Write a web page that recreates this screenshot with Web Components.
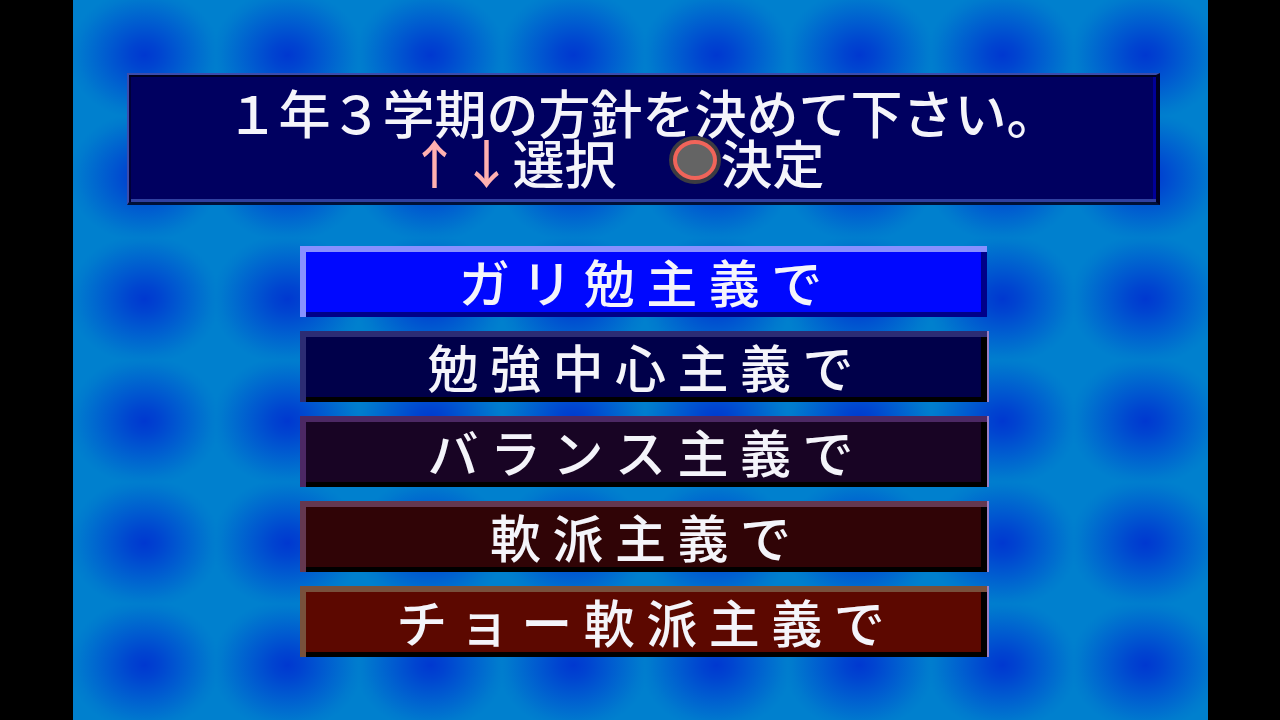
<!DOCTYPE html>
<html lang="ja">
<head>
<meta charset="utf-8">
<meta name="viewport" content="width=device-width, initial-scale=1">
<title>方針選択</title>
<style>
    html, body {
        height: 100%;
    }

    body {
        margin: 0;
        background: #000;
        color: #f4f4fa;
        font-family: "Noto Sans CJK JP", sans-serif;
        font-weight: 500;
    }
</style>
</head>
<body>

<policy-screen>
    <message-panel>
        <span>１年３学期の方針を決めて下さい。</span>
        <key-guide slot="guide"></key-guide>
    </message-panel>
    <policy-menu>
        <policy-option tone="blue" selected>ガ リ 勉 主 義 で</policy-option>
        <policy-option tone="navy">勉 強 中 心 主 義 で</policy-option>
        <policy-option tone="purple">バ ラ ン ス 主 義 で</policy-option>
        <policy-option tone="maroon">軟 派 主 義 で</policy-option>
        <policy-option tone="red">チ ョ ー 軟 派 主 義 で</policy-option>
    </policy-menu>
</policy-screen>

<script>
class PolicyScreen extends HTMLElement {
    constructor() {
        super()

        this.attachShadow({ mode: "open" })

        this.shadowRoot.innerHTML = /*html*/ `
            <style>
                :host {
                    display: block;
                    box-sizing: border-box;
                    min-height: 100%;
                    padding: 0 72px 0 73px;
                    background: #000;
                }

                main {
                    display: flex;
                    flex-direction: column;
                    gap: 41px;
                    box-sizing: border-box;
                    min-height: 100vh;
                    padding: 73px 48px 0 54px;
                    background: radial-gradient(76px 65px, #0038d0 0%, #0044d0 20%, #0058d0 45%, #006ccf 70%, #007ace 88%, #0080ce 100%) 0 -6px / 143px 122px #0080ce;
                }
            </style>

            <main><slot></slot></main>
        `
    }
}

class MessagePanel extends HTMLElement {
    constructor() {
        super()

        this.attachShadow({ mode: "open" })

        this.shadowRoot.innerHTML = /*html*/ `
            <style>
                :host {
                    display: block;
                    border: solid;
                    border-width: 2px 4px 3px 2px;
                    border-color: #3c4cac #000022 #001038 #3c4cac;
                    background: #000060;
                    box-shadow:
                        inset 0 2px #000020,
                        inset 2px 0 #000038,
                        inset 0 -3px #3040a0,
                        inset -3px 0 #000098;
                }

                h1 {
                    margin: 0;
                    padding: 12px 0 15px;
                    font-size: 52px;
                    font-weight: inherit;
                    line-height: 50px;
                    text-align: center;
                    white-space: nowrap;
                }
            </style>

            <h1><slot></slot><slot name="guide"></slot></h1>
        `
    }
}

class KeyGuide extends HTMLElement {
    constructor() {
        super()

        this.attachShadow({ mode: "open" })

        this.shadowRoot.innerHTML = /*html*/ `
            <style>
                :host {
                    display: block;
                }

                div {
                    white-space: pre;
                }

                .arrow {
                    color: #ffb0b0;
                }

                svg {
                    width: 1em;
                    height: 50px;
                    vertical-align: top;
                    overflow: visible;
                }
            </style>

            <div><span class="arrow">↑↓</span>選択　<svg viewBox="0 0 52 50" role="img" aria-label="まるボタン"><ellipse cx="26" cy="23" rx="26" ry="24" fill="#3c3c42"/><ellipse cx="26" cy="23" rx="20" ry="18" fill="#646464" stroke="#f0645a" stroke-width="4"/></svg>決定　</div>
        `
    }
}

class PolicyMenu extends HTMLElement {
    constructor() {
        super()

        this.attachShadow({ mode: "open" })

        this.shadowRoot.innerHTML = /*html*/ `
            <style>
                :host {
                    display: flex;
                    flex-direction: column;
                    gap: 14px;
                    width: 66.5%;
                    margin: 0 auto;
                }
            </style>

            <slot></slot>
        `

        this.addEventListener("click", event => {
            const option = event.target.closest("policy-option")
            if (option) this.select(option)
        })

        this.addEventListener("keydown", event => {
            const step = event.key === "ArrowDown" ? 1 : event.key === "ArrowUp" ? -1 : 0
            if (!step) return

            event.preventDefault()
            const options = [...this.children]
            const current = options.findIndex(option => option.selected)
            const next = options[(current + step + options.length) % options.length]
            this.select(next)
            next.focus()
        })
    }

    select(selected) {
        for (const option of this.children) {
            option.toggleAttribute("selected", option === selected)
        }
    }
}

class PolicyOption extends HTMLElement {
    static get observedAttributes() {
        return ["selected"]
    }

    get selected() {
        return this.hasAttribute("selected")
    }

    constructor() {
        super()

        this.attachShadow({ mode: "open", delegatesFocus: true })

        this.shadowRoot.innerHTML = /*html*/ `
            <style>
                :host {
                    display: block;
                    --face: #00004a;
                    --light: #2c2c74;
                    --dark: #000;
                    --edge: #9c80c4;
                }

                :host([tone="blue"]) {
                    --face: #0008ff;
                    --light: #8890ff;
                    --dark: #000088;
                    --edge: transparent;
                }

                :host([tone="purple"]) {
                    --face: #180424;
                    --light: #4c2864;
                }

                :host([tone="maroon"]) {
                    --face: #300406;
                    --light: #643850;
                }

                :host([tone="red"]) {
                    --face: #5c0800;
                    --light: #78503c;
                }

                button {
                    display: block;
                    box-sizing: border-box;
                    width: 100%;
                    margin: 0;
                    padding: 5px 6px 6px 0;
                    border: 0;
                    background: var(--face);
                    box-shadow:
                        inset 0 6px var(--light),
                        inset 6px 0 var(--light),
                        inset -6px 0 var(--dark),
                        inset 0 -5px var(--dark),
                        2px 0 var(--edge);
                    color: inherit;
                    font: inherit;
                    font-size: 51px;
                    line-height: 60px;
                    text-align: center;
                    white-space: nowrap;
                    cursor: pointer;
                }

                button:focus-visible {
                    outline: 2px solid #fff;
                }
            </style>

            <button type="button"><slot></slot></button>
        `

        this.attributeChangedCallback()
    }

    attributeChangedCallback() {
        this.shadowRoot.querySelector("button").setAttribute("aria-pressed", this.selected)
    }
}

customElements.define("policy-screen", PolicyScreen)
customElements.define("message-panel", MessagePanel)
customElements.define("key-guide", KeyGuide)
customElements.define("policy-menu", PolicyMenu)
customElements.define("policy-option", PolicyOption)
</script>
</body>
</html>
